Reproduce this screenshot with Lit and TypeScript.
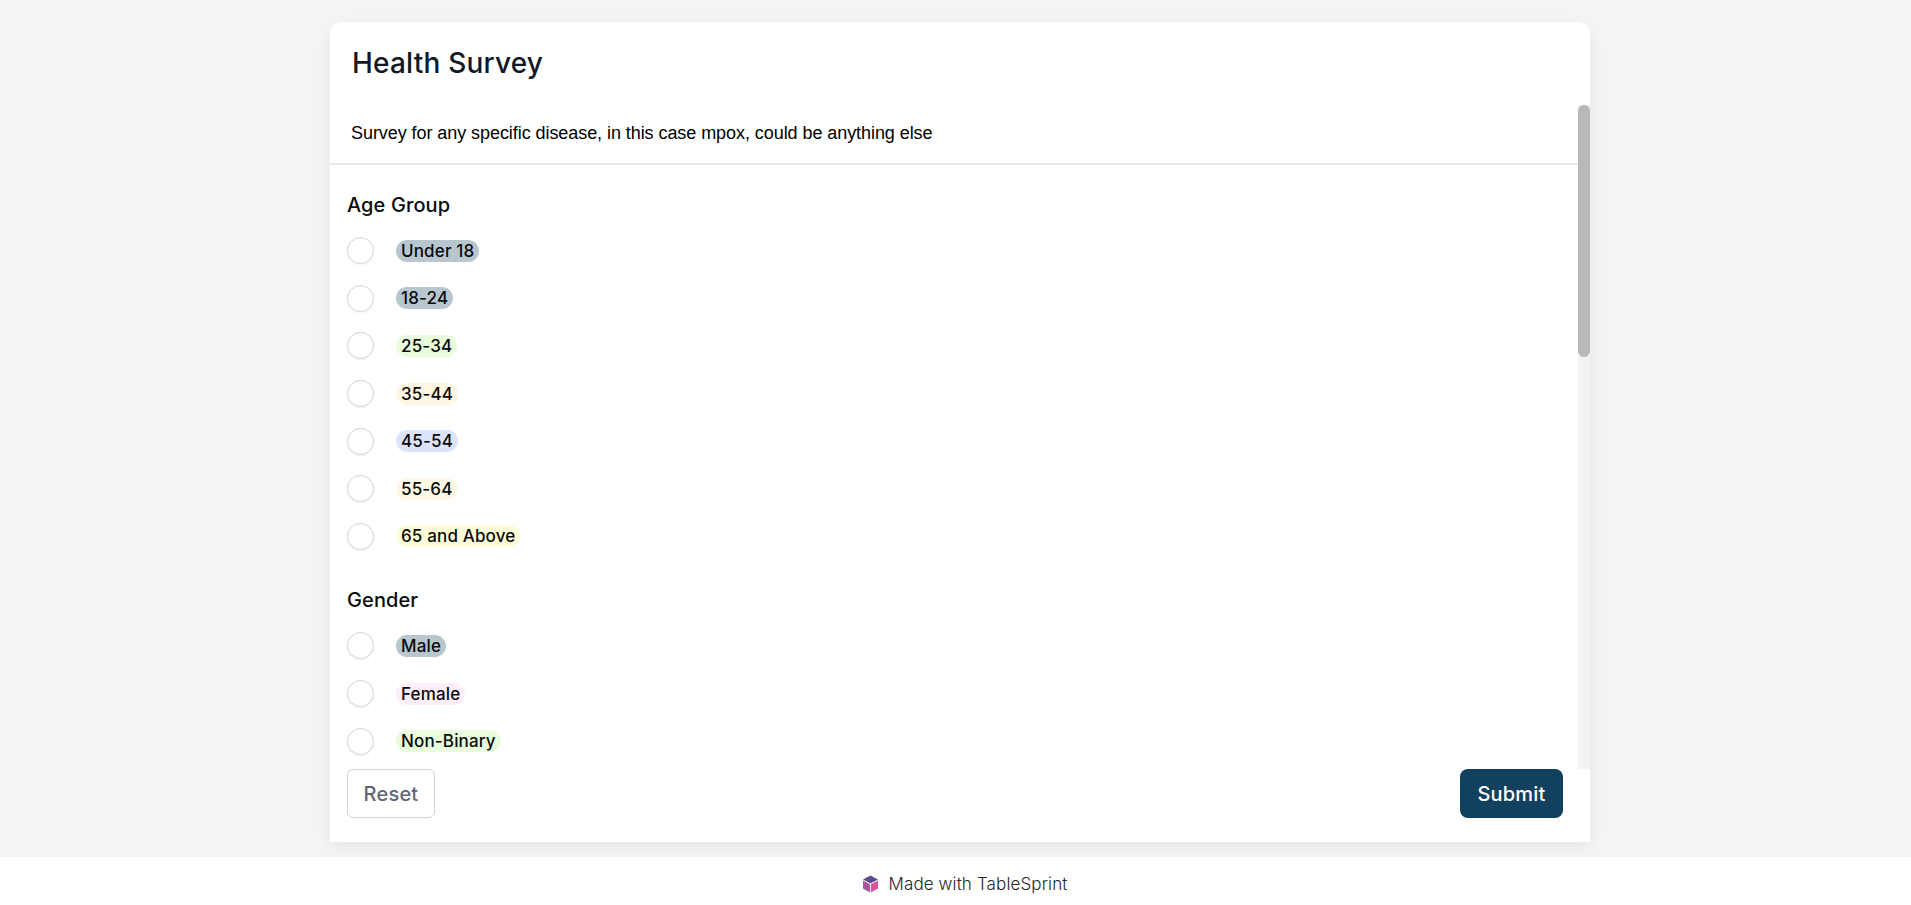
import { LitElement, html, css } from 'lit';
import { customElement } from 'lit/decorators.js';

interface Option {
  label: string;
  color: string;
}

interface Question {
  title: string;
  options: Option[];
}

const QUESTIONS: Question[] = [
  {
    title: 'Age Group',
    options: [
      { label: 'Under 18', color: '#b8c7ce' },
      { label: '18-24', color: '#b8c7ce' },
      { label: '25-34', color: '#e9fcdc' },
      { label: '35-44', color: '#fdf6e3' },
      { label: '45-54', color: '#dbe4fb' },
      { label: '55-64', color: '#fdf8e6' },
      { label: '65 and Above', color: '#fdfdd8' },
    ],
  },
  {
    title: 'Gender',
    options: [
      { label: 'Male', color: '#b8c7ce' },
      { label: 'Female', color: '#fdeef9' },
      { label: 'Non-Binary', color: '#e9fcdc' },
    ],
  },
];

@customElement('app-root')
export class AppRoot extends LitElement {
  static styles = css`
    :host {
      display: flex;
      flex-direction: column;
      height: 905px;
      background: #f3f4f6;
      font-family: Inter, 'Noto Sans', sans-serif;
      overflow: hidden;
    }
    .main {
      flex: 1;
      min-height: 0;
      display: flex;
      justify-content: center;
      padding: 22px 0 15px 9px;
    }
    .card {
      width: 1260px;
      display: flex;
      flex-direction: column;
      background: #fff;
      border-radius: 12px 12px 0 0;
      box-shadow: 0 4px 16px rgba(0, 0, 0, 0.06);
    }
    .title {
      flex: none;
      height: 83px;
      box-sizing: border-box;
      margin: 0;
      padding: 24px 22px 0;
      font-size: 28px;
      line-height: 34px;
      font-weight: 500;
      letter-spacing: 0.2px;
      color: #111827;
    }
    .body {
      flex: 1;
      min-height: 0;
      position: relative;
      overflow: hidden;
    }
    .track {
      position: absolute;
      top: 0;
      right: 0;
      bottom: 0;
      width: 12px;
      background: #f3f3f3;
    }
    .thumb {
      height: 252px;
      background: #bab7b7;
      border-radius: 6px;
    }
    .desc {
      height: 40px;
      padding: 18px 21px 0;
      border-bottom: 2px solid #e5e7eb;
      font-family: 'Liberation Sans', Arial, sans-serif;
      font-size: 18px;
      line-height: 21px;
      letter-spacing: -0.065px;
      color: #000;
    }
    .questions {
      display: flex;
      flex-direction: column;
      gap: 27px;
      padding: 27px 17px 0;
    }
    .label {
      font-size: 20px;
      line-height: 26px;
      font-weight: 500;
      letter-spacing: 0.1px;
      color: #0a0a0a;
      margin-bottom: 9px;
    }
    .option {
      display: flex;
      align-items: center;
      gap: 22px;
      height: 47.6px;
    }
    .radio {
      flex: none;
      width: 27px;
      height: 27px;
      box-sizing: border-box;
      border: 1px solid #d4d4d8;
      border-radius: 50%;
      background: #fff;
      box-shadow: 0 1px 2px rgba(0, 0, 0, 0.06);
    }
    .pill {
      height: 22px;
      padding: 0 5px;
      border-radius: 11px;
      font-size: 17px;
      line-height: 22px;
      font-weight: 500;
      letter-spacing: 0.15px;
      color: #0a0a0a;
      white-space: nowrap;
    }
    .actions {
      flex: none;
      height: 73px;
      box-sizing: border-box;
      display: flex;
      justify-content: space-between;
      align-items: flex-start;
      padding: 0 27px 0 17px;
    }
    button {
      font: inherit;
      height: 49px;
      font-size: 20px;
      font-weight: 500;
      letter-spacing: 0.2px;
      cursor: pointer;
    }
    .reset {
      width: 88px;
      background: #fff;
      color: #5f6673;
      border: 1px solid #d1d5db;
      border-radius: 6px;
    }
    .submit {
      width: 103px;
      background: #12405f;
      color: #fff;
      border: none;
      border-radius: 8px;
    }
    .footer {
      flex: none;
      height: 48px;
      box-sizing: border-box;
      padding: 6px 0 0 18px;
      display: flex;
      align-items: center;
      justify-content: center;
      gap: 10px;
      background: #fff;
      font-size: 17px;
      font-weight: 300;
      letter-spacing: 0.12px;
      color: #27272a;
    }
    .footer svg {
      width: 17px;
      height: 18px;
    }
  `;

  private renderQuestion(q: Question) {
    return html`
      <div>
        <div class="label">${q.title}</div>
        ${q.options.map(
          (o) => html`
            <div class="option">
              <span class="radio"></span>
              <span class="pill" style="background:${o.color}">${o.label}</span>
            </div>
          `,
        )}
      </div>
    `;
  }

  render() {
    return html`
      <div class="main">
        <div class="card">
          <h1 class="title">Health Survey</h1>
          <div class="body">
            <div class="desc">Survey for any specific disease, in this case mpox, could be anything else</div>
            <div class="questions">${QUESTIONS.map((q) => this.renderQuestion(q))}</div>
            <div class="track"><div class="thumb"></div></div>
          </div>
          <div class="actions">
            <button class="reset">Reset</button>
            <button class="submit">Submit</button>
          </div>
        </div>
      </div>
      <div class="footer">
        <svg viewBox="0 0 17 18">
          <path d="M8.5 0.5 16 4.5 8.5 8.5 1 4.5Z" fill="#5f4b8b" />
          <path d="M1 5.5 8 9.3V17.5L1 13.6Z" fill="#a8559b" />
          <path d="M16 5.5 9 9.3V17.5L16 13.6Z" fill="#d9529b" />
        </svg>
        Made with TableSprint
      </div>
    `;
  }
}

declare global {
  interface HTMLElementTagNameMap {
    'app-root': AppRoot;
  }
}
